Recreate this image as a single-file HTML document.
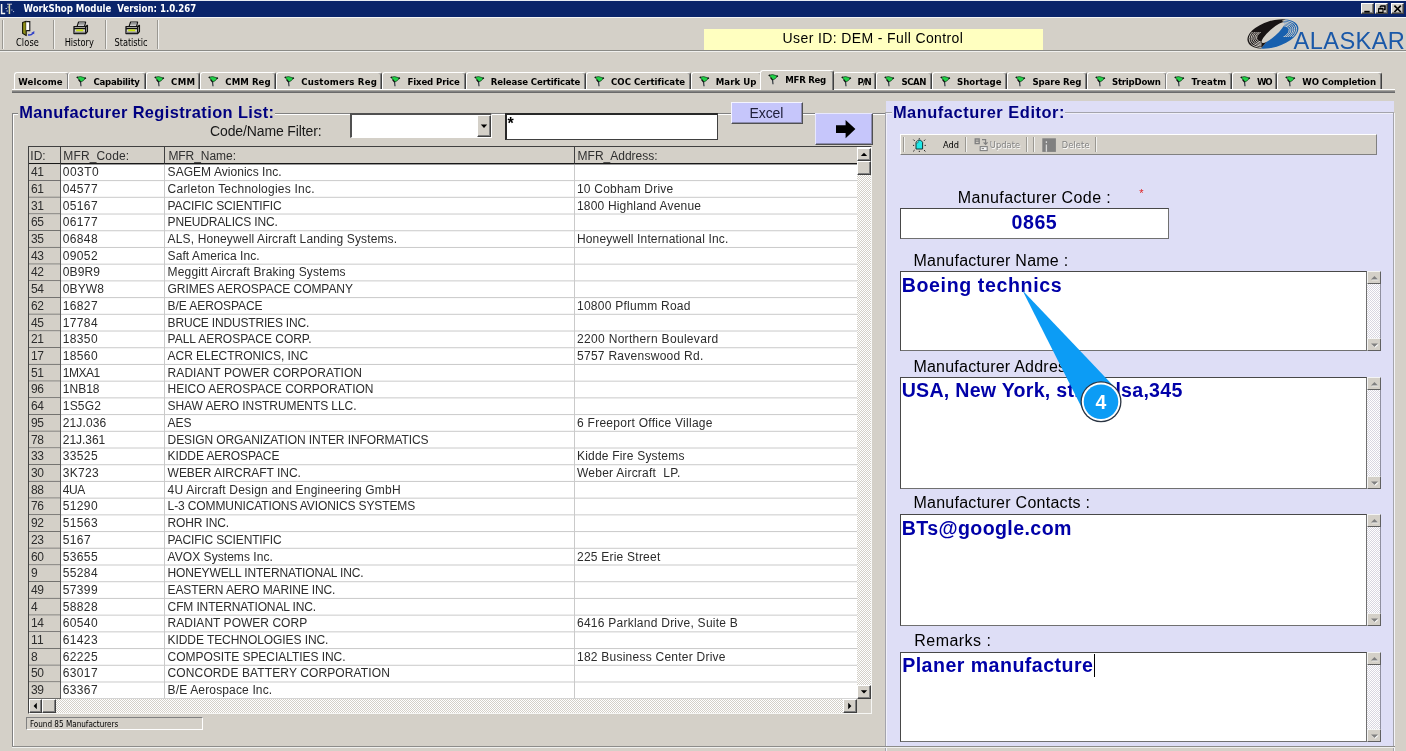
<!DOCTYPE html>
<html><head><meta charset="utf-8"><title>WorkShop Module</title>
<style>
*{box-sizing:border-box;margin:0;padding:0}
html,body{width:1406px;height:751px;overflow:hidden;background:#d4d0c8}
body{position:relative;font-family:"Liberation Sans",sans-serif;color:#000}
#all{position:absolute;left:0;top:0;width:1406px;height:751px;will-change:transform;filter:blur(.4px)}
div,span,svg,i,b{position:absolute}
.t{white-space:pre;line-height:1}
.thb{font-family:"DejaVu Sans Condensed","DejaVu Sans",sans-serif;font-weight:bold;font-size:9.55px}
#title{left:0;top:0;width:1406px;height:17px;background:#0a246a}
.wb{top:3px;width:13px;height:11px;background:#d4d0c8;border:1px solid;border-color:#fff #404040 #404040 #fff;box-shadow:inset -1px -1px 0 #808080}
#tbline{left:0;top:50px;width:1406px;height:2px;border-top:1px solid #8a8a86;border-bottom:1px solid #f0f0ee}
.vsep{top:20px;width:2px;height:29px;border-left:1px solid #9a9892;border-right:1px solid #f2f2f0}
#uid{left:704px;top:29px;width:339px;height:21px;background:#ffffc0}
/* tabs */
.tab{top:72px;height:18px;border-top:1px solid #fff;border-left:1px solid #fff;border-right:1px solid #404040;border-radius:3px 3px 0 0;background:#d4d0c8;box-shadow:inset -1px 0 0 #808080}
.tab .t{top:3.6px}
.tab svg{left:6.6px;top:2.6px}
.tab.sel{top:70px;height:20px;z-index:3}
#tabline{left:12px;top:89px;width:1383px;height:4px;border-top:1px solid #fff;background:#828282;border-bottom:1px solid #6a6a6a;z-index:2}
#tabline b{left:0;top:0;width:100%;height:1px;background:#a8a6a0}
/* group boxes */
.grp{border:1px solid #808080;box-shadow:1px 1px 0 #fff, inset 1px 1px 0 #fff}
/* grid */
#grid{left:28px;top:146px;width:844px;height:568px;background:#fff;border-left:1px solid #404040;border-top:1px solid #404040;border-right:1px solid #f6f6f4;border-bottom:1px solid #f6f6f4}
.hd{top:147px;height:17px;background:#d4d0c8;border-right:1px solid #404040;border-bottom:1px solid #181818;box-shadow:0 1px 0 #9a9a9a}
.r{left:29px;top:0;height:16.713px;width:828px;border-bottom:1px solid #cacaca;font-size:12px;color:#2c2c2c;white-space:pre;line-height:1}
.r span{top:2.4px}
.c0{left:0;top:0!important;width:32px;height:100%;background:#d4d0c8;border-right:1px solid #505050;box-shadow:0 1px 0 #505050}
.c0 .u{top:2.4px}


.vl{top:165px;width:1px;height:534px;background:#cacaca}
.sbtn{background:#d4d0c8;border:1px solid;border-color:#fff #404040 #404040 #fff;box-shadow:inset -1px -1px 0 #808080}
.dither{background:#eae8e4;background-image:conic-gradient(#fff 25%,#d4d0c8 0 50%,#fff 0 75%,#d4d0c8 0);background-size:2px 2px}
/* right panel */
#rp{left:886px;top:101px;width:508px;height:645px;background:#dedef6}
.box{background:#fff;border:1px solid #484848;border-right-color:#707070;border-bottom-color:#707070}
.msb{width:14px;background:#efeef2;background-image:conic-gradient(#fff 25%,#d8d6e0 0 50%,#fff 0 75%,#d8d6e0 0);background-size:2px 2px;border-right:1px solid #9090a0}
.msb i{left:0;width:14px;height:13px;background:#d4d0c8;border:1px solid;border-color:#f4f4f4 #606060 #606060 #f4f4f4}

</style></head>
<body><div id="all">

<div id="title">
<svg style="left:0;top:2px" width="16" height="14" viewBox="0 0 16 14"><path d="M1.6 2v9.4h3.6" stroke="#f4f4f4" stroke-width="1.5" fill="none"/><path d="M9.4 2v10" stroke="#d8d8a0" stroke-width="1.5"/><path d="M7 2.2h5" stroke="#c8c8d8" stroke-width="1"/><path d="M5.6 6.5h1.2M6.6 9h1.2M11.4 8h1M13.2 9.6h.9M7.6 5h1" stroke="#e8e8f0" stroke-width="1"/></svg>
<span class="t" style="left:23.60px;top:4.3px;font:bold 9.55px/1 'DejaVu Sans Condensed',sans-serif;letter-spacing:-0.006px;color:#fff;transform:scaleY(1.12);transform-origin:0 8px">WorkShop Module  Version: 1.0.267</span>
<div class="wb" style="left:1361px"><svg width="12" height="10" viewBox="0 0 12 10" style="left:0;top:0"><rect x="2.3" y="6.8" width="5.4" height="1.8" fill="#000"/></svg></div>
<div class="wb" style="left:1375px"><svg width="12" height="10" viewBox="0 0 12 10" style="left:0;top:0"><path d="M4.4 2h4.6v3.6h-1.4M4.4 2v1.6" fill="none" stroke="#000" stroke-width="1.5"/><path d="M2.6 4.8h4.4v3.6H2.6z" fill="none" stroke="#000" stroke-width="1.1"/><path d="M2.6 4.6h4.4" stroke="#000" stroke-width="1.6"/></svg></div>
<div class="wb" style="left:1391px"><svg width="12" height="10" viewBox="0 0 12 10" style="left:0;top:0"><path d="M2.4 1.6l6.4 6.4M8.8 1.6L2.4 8" stroke="#000" stroke-width="1.7" fill="none"/></svg></div>
</div>
<div style="left:0;top:17px;width:1406px;height:1px;background:#f4f4f4"></div><div style="left:0;top:0;width:1406px;height:1px;background:#e8ecf4;z-index:5"></div>
<div id="tbline"></div>
<div class="vsep" style="left:2px"></div><div class="vsep" style="left:53px"></div><div class="vsep" style="left:105px"></div><div class="vsep" style="left:157px"></div>
<svg style="left:21px;top:20px" width="15" height="17" viewBox="0 0 15 17"><path d="M1.6 2.6 L5.2 1.2 V15.6 L1.6 13.2 Z" fill="#909018" stroke="#181808" stroke-width="1.1" stroke-linejoin="round"/><path d="M5.2 1.6 H8.8 V10.6 H5.2" fill="#fff" stroke="#181818" stroke-width="1.1"/><path d="M7 14.8c2.2 .6 3.8 -.2 5 -1.6" stroke="#3040c8" stroke-width="1.5" fill="none"/><path d="M13.4 11l-.2 3.3-3-1.2z" fill="#3040c8"/></svg>
<svg style="left:72.5px;top:21px" width="16" height="15" viewBox="0 0 16 15"><path d="M4.2 5.2 L5.6 1 H12.6 L11.6 5.2" fill="#f4f4f4" stroke="#101010" stroke-width="1.2" stroke-linejoin="round"/><path d="M6 2.6h5.5M5.6 3.9h5.5" stroke="#606060" stroke-width=".7"/><path d="M1 5.6 H12.6 L14.4 4.4 V10.6 L12.6 12.6 H1 Z" fill="#d8d6d0" stroke="#101010" stroke-width="1.3" stroke-linejoin="round"/><path d="M1 7.6H12.6 M12.6 5.6V12.6" stroke="#101010" stroke-width="1.2"/><rect x="3.2" y="8.4" width="7" height="1.9" fill="#c8e010"/><path d="M1.6 11.4h10.6" stroke="#808080" stroke-width="1.4"/><path d="M2.5 13.6h10" stroke="#a0a0a0" stroke-width="1"/></svg>
<svg style="left:124.5px;top:21px" width="16" height="15" viewBox="0 0 16 15"><path d="M4.2 5.2 L5.6 1 H12.6 L11.6 5.2" fill="#f4f4f4" stroke="#101010" stroke-width="1.2" stroke-linejoin="round"/><path d="M6 2.6h5.5M5.6 3.9h5.5" stroke="#606060" stroke-width=".7"/><path d="M1 5.6 H12.6 L14.4 4.4 V10.6 L12.6 12.6 H1 Z" fill="#d8d6d0" stroke="#101010" stroke-width="1.3" stroke-linejoin="round"/><path d="M1 7.6H12.6 M12.6 5.6V12.6" stroke="#101010" stroke-width="1.2"/><rect x="3.2" y="8.4" width="7" height="1.9" fill="#c8e010"/><path d="M1.6 11.4h10.6" stroke="#808080" stroke-width="1.4"/><path d="M2.5 13.6h10" stroke="#a0a0a0" stroke-width="1"/></svg>
<span class="t" style="left:16.00px;top:37.6px;font:normal 9.2px/1 'DejaVu Sans Condensed',sans-serif;letter-spacing:0.092px;transform:scaleY(1.08);transform-origin:0 8px">Close</span>
<span class="t" style="left:64.70px;top:37.6px;font:normal 9.2px/1 'DejaVu Sans Condensed',sans-serif;letter-spacing:-0.052px;transform:scaleY(1.08);transform-origin:0 8px">History</span>
<span class="t" style="left:114.50px;top:37.6px;font:normal 9.2px/1 'DejaVu Sans Condensed',sans-serif;letter-spacing:-0.054px;transform:scaleY(1.08);transform-origin:0 8px">Statistic</span>

<div id="uid"></div>
<span class="t" style="left:782.60px;top:31.0px;font:normal 14px/1 'Liberation Sans',sans-serif;letter-spacing:0.379px;">User ID: DEM - Full Control</span>

<svg id="logo" style="left:1244px;top:17px" width="162" height="34" viewBox="0 0 162 34">
<defs>
<clipPath id="ck"><path d="M-20 70 L16.5 32 L42.5 1 L60 -20 L-40 -40 Z"/></clipPath>
<clipPath id="cb"><path d="M-20 70 L16.5 32 L42.5 1 L60 -20 L120 60 Z"/></clipPath>
<clipPath id="ce"><path d="M-2 15 H17.5 V34 H-2 Z M38.5 0 H58 V20 H38.5 Z"/></clipPath>
</defs>
<g fill-rule="evenodd">
<path id="ring" clip-path="url(#cb)" fill="#1860ae" d="M3.77 24.40 A26.2 13.0 -16.4 1 0 54.03 9.60 A26.2 13.0 -16.4 1 0 3.77 24.40 Z M18 25.4 A14.6 3.6 -41.7 1 0 39.8 6 A14.6 3.6 -41.7 1 0 18 25.4 Z"/>
<path clip-path="url(#ck)" fill="#181414" d="M3.77 24.40 A26.2 13.0 -16.4 1 0 54.03 9.60 A26.2 13.0 -16.4 1 0 3.77 24.40 Z M18 25.4 A14.6 3.6 -41.7 1 0 39.8 6 A14.6 3.6 -41.7 1 0 18 25.4 Z"/>
</g>
<g fill="none" stroke="#d4d0c8" stroke-width=".95" clip-path="url(#ce)"><path d="M5.53 23.88 A24.37 11.86 -16.4 1 0 52.27 10.12 A24.37 11.86 -16.4 1 0 5.53 23.88"/><path d="M7.28 23.36 A22.53 10.72 -16.4 1 0 50.52 10.64 A22.53 10.72 -16.4 1 0 7.28 23.36"/><path d="M9.04 22.84 A20.70 9.59 -16.4 1 0 48.76 11.16 A20.70 9.59 -16.4 1 0 9.04 22.84"/><path d="M10.80 22.33 A18.86 8.45 -16.4 1 0 47.00 11.67 A18.86 8.45 -16.4 1 0 10.80 22.33"/><path d="M12.56 21.81 A17.03 7.31 -16.4 1 0 45.24 12.19 A17.03 7.31 -16.4 1 0 12.56 21.81"/></g>
<text x="49.6" y="32.2" font-family="Liberation Sans, sans-serif" font-size="23.6" fill="#1a58a8" letter-spacing="0.4">ALASKAR</text>
</svg>

<div class="tab" style="left:14px;width:55px"><span class="t thb" style="left:3.30px;letter-spacing:0.109px">Welcome</span></div>
<div class="tab" style="left:68px;width:78px"><svg style="left:6.6px" width="11" height="11" viewBox="0 0 11 11"><path d="M1 1.2 L4.6 0.6 L9.6 2 L7.4 4.6 L4.8 6 L2.8 3.6 Z" fill="#22d048" stroke="#0a3a14" stroke-width=".7" stroke-linejoin="round"/><path d="M.7 .9l1.2 .9M9.9 1.8l-1.3 .9M2.6 3.6L4.6 6.2" stroke="#101010" stroke-width="1.3" fill="none"/><path d="M4.6 6 L5 10.2" stroke="#202830" stroke-width="1.1" fill="none"/></svg><span class="t thb" style="left:24.50px;letter-spacing:-0.258px">Capability</span></div>
<div class="tab" style="left:146px;width:54px"><svg style="left:6.6px" width="11" height="11" viewBox="0 0 11 11"><path d="M1 1.2 L4.6 0.6 L9.6 2 L7.4 4.6 L4.8 6 L2.8 3.6 Z" fill="#22d048" stroke="#0a3a14" stroke-width=".7" stroke-linejoin="round"/><path d="M.7 .9l1.2 .9M9.9 1.8l-1.3 .9M2.6 3.6L4.6 6.2" stroke="#101010" stroke-width="1.3" fill="none"/><path d="M4.6 6 L5 10.2" stroke="#202830" stroke-width="1.1" fill="none"/></svg><span class="t thb" style="left:24.00px;letter-spacing:0.374px">CMM</span></div>
<div class="tab" style="left:200px;width:76px"><svg style="left:6.6px" width="11" height="11" viewBox="0 0 11 11"><path d="M1 1.2 L4.6 0.6 L9.6 2 L7.4 4.6 L4.8 6 L2.8 3.6 Z" fill="#22d048" stroke="#0a3a14" stroke-width=".7" stroke-linejoin="round"/><path d="M.7 .9l1.2 .9M9.9 1.8l-1.3 .9M2.6 3.6L4.6 6.2" stroke="#101010" stroke-width="1.3" fill="none"/><path d="M4.6 6 L5 10.2" stroke="#202830" stroke-width="1.1" fill="none"/></svg><span class="t thb" style="left:24.30px;letter-spacing:0.062px">CMM Reg</span></div>
<div class="tab" style="left:276px;width:106px"><svg style="left:6.6px" width="11" height="11" viewBox="0 0 11 11"><path d="M1 1.2 L4.6 0.6 L9.6 2 L7.4 4.6 L4.8 6 L2.8 3.6 Z" fill="#22d048" stroke="#0a3a14" stroke-width=".7" stroke-linejoin="round"/><path d="M.7 .9l1.2 .9M9.9 1.8l-1.3 .9M2.6 3.6L4.6 6.2" stroke="#101010" stroke-width="1.3" fill="none"/><path d="M4.6 6 L5 10.2" stroke="#202830" stroke-width="1.1" fill="none"/></svg><span class="t thb" style="left:24.20px;letter-spacing:0.200px">Customers Reg</span></div>
<div class="tab" style="left:382px;width:84px"><svg style="left:6.6px" width="11" height="11" viewBox="0 0 11 11"><path d="M1 1.2 L4.6 0.6 L9.6 2 L7.4 4.6 L4.8 6 L2.8 3.6 Z" fill="#22d048" stroke="#0a3a14" stroke-width=".7" stroke-linejoin="round"/><path d="M.7 .9l1.2 .9M9.9 1.8l-1.3 .9M2.6 3.6L4.6 6.2" stroke="#101010" stroke-width="1.3" fill="none"/><path d="M4.6 6 L5 10.2" stroke="#202830" stroke-width="1.1" fill="none"/></svg><span class="t thb" style="left:24.40px;letter-spacing:-0.117px">Fixed Price</span></div>
<div class="tab" style="left:466px;width:120px"><svg style="left:6.6px" width="11" height="11" viewBox="0 0 11 11"><path d="M1 1.2 L4.6 0.6 L9.6 2 L7.4 4.6 L4.8 6 L2.8 3.6 Z" fill="#22d048" stroke="#0a3a14" stroke-width=".7" stroke-linejoin="round"/><path d="M.7 .9l1.2 .9M9.9 1.8l-1.3 .9M2.6 3.6L4.6 6.2" stroke="#101010" stroke-width="1.3" fill="none"/><path d="M4.6 6 L5 10.2" stroke="#202830" stroke-width="1.1" fill="none"/></svg><span class="t thb" style="left:23.80px;letter-spacing:-0.123px">Release Certificate</span></div>
<div class="tab" style="left:586px;width:105px"><svg style="left:6.6px" width="11" height="11" viewBox="0 0 11 11"><path d="M1 1.2 L4.6 0.6 L9.6 2 L7.4 4.6 L4.8 6 L2.8 3.6 Z" fill="#22d048" stroke="#0a3a14" stroke-width=".7" stroke-linejoin="round"/><path d="M.7 .9l1.2 .9M9.9 1.8l-1.3 .9M2.6 3.6L4.6 6.2" stroke="#101010" stroke-width="1.3" fill="none"/><path d="M4.6 6 L5 10.2" stroke="#202830" stroke-width="1.1" fill="none"/></svg><span class="t thb" style="left:24.00px;letter-spacing:0.024px">COC Certificate</span></div>
<div class="tab" style="left:691px;width:71px"><svg style="left:6.6px" width="11" height="11" viewBox="0 0 11 11"><path d="M1 1.2 L4.6 0.6 L9.6 2 L7.4 4.6 L4.8 6 L2.8 3.6 Z" fill="#22d048" stroke="#0a3a14" stroke-width=".7" stroke-linejoin="round"/><path d="M.7 .9l1.2 .9M9.9 1.8l-1.3 .9M2.6 3.6L4.6 6.2" stroke="#101010" stroke-width="1.3" fill="none"/><path d="M4.6 6 L5 10.2" stroke="#202830" stroke-width="1.1" fill="none"/></svg><span class="t thb" style="left:23.70px;letter-spacing:0.058px">Mark Up</span></div>
<div class="tab sel" style="left:760px;width:74px"><svg style="left:6.9px" width="11" height="11" viewBox="0 0 11 11"><path d="M1 1.2 L4.6 0.6 L9.6 2 L7.4 4.6 L4.8 6 L2.8 3.6 Z" fill="#22d048" stroke="#0a3a14" stroke-width=".7" stroke-linejoin="round"/><path d="M.7 .9l1.2 .9M9.9 1.8l-1.3 .9M2.6 3.6L4.6 6.2" stroke="#101010" stroke-width="1.3" fill="none"/><path d="M4.6 6 L5 10.2" stroke="#202830" stroke-width="1.1" fill="none"/></svg><span class="t thb" style="left:24.30px;letter-spacing:-0.294px">MFR Reg</span></div>
<div class="tab" style="left:833px;width:43px"><svg style="left:6.6px" width="11" height="11" viewBox="0 0 11 11"><path d="M1 1.2 L4.6 0.6 L9.6 2 L7.4 4.6 L4.8 6 L2.8 3.6 Z" fill="#22d048" stroke="#0a3a14" stroke-width=".7" stroke-linejoin="round"/><path d="M.7 .9l1.2 .9M9.9 1.8l-1.3 .9M2.6 3.6L4.6 6.2" stroke="#101010" stroke-width="1.3" fill="none"/><path d="M4.6 6 L5 10.2" stroke="#202830" stroke-width="1.1" fill="none"/></svg><span class="t thb" style="left:23.60px;letter-spacing:-1.200px">P/N</span></div>
<div class="tab" style="left:876px;width:56px"><svg style="left:6.6px" width="11" height="11" viewBox="0 0 11 11"><path d="M1 1.2 L4.6 0.6 L9.6 2 L7.4 4.6 L4.8 6 L2.8 3.6 Z" fill="#22d048" stroke="#0a3a14" stroke-width=".7" stroke-linejoin="round"/><path d="M.7 .9l1.2 .9M9.9 1.8l-1.3 .9M2.6 3.6L4.6 6.2" stroke="#101010" stroke-width="1.3" fill="none"/><path d="M4.6 6 L5 10.2" stroke="#202830" stroke-width="1.1" fill="none"/></svg><span class="t thb" style="left:24.40px;letter-spacing:-0.412px">SCAN</span></div>
<div class="tab" style="left:932px;width:75px"><svg style="left:6.6px" width="11" height="11" viewBox="0 0 11 11"><path d="M1 1.2 L4.6 0.6 L9.6 2 L7.4 4.6 L4.8 6 L2.8 3.6 Z" fill="#22d048" stroke="#0a3a14" stroke-width=".7" stroke-linejoin="round"/><path d="M.7 .9l1.2 .9M9.9 1.8l-1.3 .9M2.6 3.6L4.6 6.2" stroke="#101010" stroke-width="1.3" fill="none"/><path d="M4.6 6 L5 10.2" stroke="#202830" stroke-width="1.1" fill="none"/></svg><span class="t thb" style="left:24.00px;letter-spacing:0.030px">Shortage</span></div>
<div class="tab" style="left:1007px;width:80px"><svg style="left:6.6px" width="11" height="11" viewBox="0 0 11 11"><path d="M1 1.2 L4.6 0.6 L9.6 2 L7.4 4.6 L4.8 6 L2.8 3.6 Z" fill="#22d048" stroke="#0a3a14" stroke-width=".7" stroke-linejoin="round"/><path d="M.7 .9l1.2 .9M9.9 1.8l-1.3 .9M2.6 3.6L4.6 6.2" stroke="#101010" stroke-width="1.3" fill="none"/><path d="M4.6 6 L5 10.2" stroke="#202830" stroke-width="1.1" fill="none"/></svg><span class="t thb" style="left:24.40px;letter-spacing:-0.090px">Spare Reg</span></div>
<div class="tab" style="left:1087px;width:80px"><svg style="left:6.6px" width="11" height="11" viewBox="0 0 11 11"><path d="M1 1.2 L4.6 0.6 L9.6 2 L7.4 4.6 L4.8 6 L2.8 3.6 Z" fill="#22d048" stroke="#0a3a14" stroke-width=".7" stroke-linejoin="round"/><path d="M.7 .9l1.2 .9M9.9 1.8l-1.3 .9M2.6 3.6L4.6 6.2" stroke="#101010" stroke-width="1.3" fill="none"/><path d="M4.6 6 L5 10.2" stroke="#202830" stroke-width="1.1" fill="none"/></svg><span class="t thb" style="left:24.00px;letter-spacing:-0.223px">StripDown</span></div>
<div class="tab" style="left:1166px;width:66px"><svg style="left:6.6px" width="11" height="11" viewBox="0 0 11 11"><path d="M1 1.2 L4.6 0.6 L9.6 2 L7.4 4.6 L4.8 6 L2.8 3.6 Z" fill="#22d048" stroke="#0a3a14" stroke-width=".7" stroke-linejoin="round"/><path d="M.7 .9l1.2 .9M9.9 1.8l-1.3 .9M2.6 3.6L4.6 6.2" stroke="#101010" stroke-width="1.3" fill="none"/><path d="M4.6 6 L5 10.2" stroke="#202830" stroke-width="1.1" fill="none"/></svg><span class="t thb" style="left:24.50px;letter-spacing:0.205px">Treatm</span></div>
<div class="tab" style="left:1232px;width:45px"><svg style="left:6.6px" width="11" height="11" viewBox="0 0 11 11"><path d="M1 1.2 L4.6 0.6 L9.6 2 L7.4 4.6 L4.8 6 L2.8 3.6 Z" fill="#22d048" stroke="#0a3a14" stroke-width=".7" stroke-linejoin="round"/><path d="M.7 .9l1.2 .9M9.9 1.8l-1.3 .9M2.6 3.6L4.6 6.2" stroke="#101010" stroke-width="1.3" fill="none"/><path d="M4.6 6 L5 10.2" stroke="#202830" stroke-width="1.1" fill="none"/></svg><span class="t thb" style="left:24.00px;letter-spacing:-1.200px">WO</span></div>
<div class="tab" style="left:1277px;width:105px"><svg style="left:6.6px" width="11" height="11" viewBox="0 0 11 11"><path d="M1 1.2 L4.6 0.6 L9.6 2 L7.4 4.6 L4.8 6 L2.8 3.6 Z" fill="#22d048" stroke="#0a3a14" stroke-width=".7" stroke-linejoin="round"/><path d="M.7 .9l1.2 .9M9.9 1.8l-1.3 .9M2.6 3.6L4.6 6.2" stroke="#101010" stroke-width="1.3" fill="none"/><path d="M4.6 6 L5 10.2" stroke="#202830" stroke-width="1.1" fill="none"/></svg><span class="t thb" style="left:24.30px;letter-spacing:-0.099px">WO Completion</span></div>
<div id="tabline"><b></b></div>

<!-- left group -->
<div class="grp" style="left:12px;top:113px;width:880px;height:634px"></div>
<div style="left:18px;top:105px;width:257px;height:16px;background:#d4d0c8"></div>
<span class="t" style="left:19.20px;top:103.7px;font:bold 16.4px/1 'Liberation Sans',sans-serif;letter-spacing:0.390px;color:#000080">Manufacturer Registration List:</span>
<span class="t" style="left:210.00px;top:123.6px;font:normal 14px/1 'Liberation Sans',sans-serif;letter-spacing:-0.125px;color:#181818">Code/Name Filter:</span>
<div class="box" style="left:350px;top:113px;width:142px;height:25px;border-width:2px 1px 1px 2px;border-color:#505050 #fff #fff #505050"><div class="sbtn" style="left:125px;top:0;width:14px;height:22px"><svg width="12" height="20" viewBox="0 0 12 20" style="left:0;top:0"><path d="M2.8 8.6h6.4l-3.2 3.4z" fill="#000"/></svg></div></div>
<div class="box" style="left:505px;top:113px;width:213px;height:27px;border-width:2px 1px 1px 2px;border-color:#282828 #404040 #404040 #282828"><span class="t" style="left:0.5px;top:1px;font:bold 16px/1 'Liberation Sans',sans-serif">*</span></div>
<div style="left:731px;top:102px;width:72px;height:22px;background:#c6c6fb;border:1px solid;border-color:#f4f4ff #505050 #505050 #f4f4ff;box-shadow:inset -1px -1px 0 #8c8cb0"></div>
<span class="t" style="left:749.50px;top:105.6px;font:normal 14px/1 'Liberation Sans',sans-serif;letter-spacing:-0.106px;color:#20203c">Excel</span>
<div style="left:815px;top:113px;width:58px;height:32px;background:#c6c6fb;border:1px solid;border-color:#e8e8ff #505050 #505050 #e8e8ff;box-shadow:inset -1px -1px 0 #8c8cb0"><svg width="24" height="22" viewBox="0 0 24 22" style="left:17.5px;top:4.5px"><path d="M2 6.3h9.6V1L21.4 10 11.6 19.2v-5.3H2z" fill="#000"/></svg></div>

<div id="grid"></div>
<div class="hd" style="left:29px;width:32px"></div>
<div class="hd" style="left:61px;width:104px"></div>
<div class="hd" style="left:165px;width:410px"></div>
<div class="hd" style="left:575px;width:282px;border-right:0"></div>
<span class="t" style="left:30.30px;top:149.6px;font:normal 12px/1 'Liberation Sans',sans-serif;letter-spacing:0.000px;color:#303030">ID:</span><span class="t" style="left:63.30px;top:149.6px;font:normal 12px/1 'Liberation Sans',sans-serif;letter-spacing:0.143px;color:#303030">MFR_Code:</span><span class="t" style="left:168.40px;top:149.6px;font:normal 12px/1 'Liberation Sans',sans-serif;letter-spacing:-0.047px;color:#303030">MFR_Name:</span><span class="t" style="left:577.60px;top:149.6px;font:normal 12px/1 'Liberation Sans',sans-serif;letter-spacing:0.000px;color:#303030">MFR_Address:</span>
<div class="r" style="transform:translateY(164.10px)"><span class="c0"><span class="u" style="left:2.00px;letter-spacing:-0.500px">41</span></span><span class="c1" style="left:33.80px;letter-spacing:0.437px">003T0</span><span class="c2" style="left:138.60px;letter-spacing:0.045px">SAGEM Avionics Inc.</span></div>
<div class="r" style="transform:translateY(180.81px)"><span class="c0"><span class="u" style="left:2.00px;letter-spacing:-0.500px">61</span></span><span class="c1" style="left:33.80px;letter-spacing:0.351px">04577</span><span class="c2" style="left:138.60px;letter-spacing:0.229px">Carleton Technologies Inc.</span><span class="c3" style="left:548.00px;letter-spacing:0.200px">10 Cobham Drive</span></div>
<div class="r" style="transform:translateY(197.53px)"><span class="c0"><span class="u" style="left:2.00px;letter-spacing:-0.500px">31</span></span><span class="c1" style="left:33.80px;letter-spacing:0.351px">05167</span><span class="c2" style="left:138.60px;letter-spacing:-0.146px">PACIFIC SCIENTIFIC</span><span class="c3" style="left:548.00px;letter-spacing:0.177px">1800 Highland Avenue</span></div>
<div class="r" style="transform:translateY(214.24px)"><span class="c0"><span class="u" style="left:2.00px;letter-spacing:-0.500px">65</span></span><span class="c1" style="left:33.80px;letter-spacing:0.351px">06177</span><span class="c2" style="left:138.60px;letter-spacing:-0.164px">PNEUDRALICS INC.</span></div>
<div class="r" style="transform:translateY(230.95px)"><span class="c0"><span class="u" style="left:2.00px;letter-spacing:-0.500px">35</span></span><span class="c1" style="left:33.80px;letter-spacing:0.351px">06848</span><span class="c2" style="left:138.60px;letter-spacing:0.138px">ALS, Honeywell Aircraft Landing Systems.</span><span class="c3" style="left:548.00px;letter-spacing:0.141px">Honeywell International Inc.</span></div>
<div class="r" style="transform:translateY(247.66px)"><span class="c0"><span class="u" style="left:2.00px;letter-spacing:-0.500px">43</span></span><span class="c1" style="left:33.80px;letter-spacing:0.351px">09052</span><span class="c2" style="left:138.60px;letter-spacing:0.086px">Saft America Inc.</span></div>
<div class="r" style="transform:translateY(264.38px)"><span class="c0"><span class="u" style="left:2.00px;letter-spacing:-0.500px">42</span></span><span class="c1" style="left:33.80px;letter-spacing:0.121px">0B9R9</span><span class="c2" style="left:138.60px;letter-spacing:0.147px">Meggitt Aircraft Braking Systems</span></div>
<div class="r" style="transform:translateY(281.09px)"><span class="c0"><span class="u" style="left:2.00px;letter-spacing:-0.500px">54</span></span><span class="c1" style="left:33.80px;letter-spacing:0.123px">0BYW8</span><span class="c2" style="left:138.60px;letter-spacing:-0.069px">GRIMES AEROSPACE COMPANY</span></div>
<div class="r" style="transform:translateY(297.80px)"><span class="c0"><span class="u" style="left:2.00px;letter-spacing:-0.500px">62</span></span><span class="c1" style="left:33.80px;letter-spacing:0.351px">16827</span><span class="c2" style="left:138.60px;letter-spacing:-0.073px">B/E AEROSPACE</span><span class="c3" style="left:548.00px;letter-spacing:0.255px">10800 Pflumm Road</span></div>
<div class="r" style="transform:translateY(314.52px)"><span class="c0"><span class="u" style="left:2.00px;letter-spacing:-0.500px">45</span></span><span class="c1" style="left:33.80px;letter-spacing:0.351px">17784</span><span class="c2" style="left:138.60px;letter-spacing:-0.181px">BRUCE INDUSTRIES INC.</span></div>
<div class="r" style="transform:translateY(331.23px)"><span class="c0"><span class="u" style="left:2.00px;letter-spacing:-0.500px">21</span></span><span class="c1" style="left:33.80px;letter-spacing:0.351px">18350</span><span class="c2" style="left:138.60px;letter-spacing:-0.013px">PALL AEROSPACE CORP.</span><span class="c3" style="left:548.00px;letter-spacing:0.322px">2200 Northern Boulevard</span></div>
<div class="r" style="transform:translateY(347.94px)"><span class="c0"><span class="u" style="left:2.00px;letter-spacing:-0.500px">17</span></span><span class="c1" style="left:33.80px;letter-spacing:0.351px">18560</span><span class="c2" style="left:138.60px;letter-spacing:-0.047px">ACR ELECTRONICS, INC</span><span class="c3" style="left:548.00px;letter-spacing:0.273px">5757 Ravenswood Rd.</span></div>
<div class="r" style="transform:translateY(364.66px)"><span class="c0"><span class="u" style="left:2.00px;letter-spacing:-0.500px">51</span></span><span class="c1" style="left:33.80px;letter-spacing:-0.500px">1MXA1</span><span class="c2" style="left:138.60px;letter-spacing:0.064px">RADIANT POWER CORPORATION</span></div>
<div class="r" style="transform:translateY(381.37px)"><span class="c0"><span class="u" style="left:2.00px;letter-spacing:-0.500px">96</span></span><span class="c1" style="left:33.80px;letter-spacing:-0.004px">1NB18</span><span class="c2" style="left:138.60px;letter-spacing:-0.014px">HEICO AEROSPACE CORPORATION</span></div>
<div class="r" style="transform:translateY(398.08px)"><span class="c0"><span class="u" style="left:2.00px;letter-spacing:-0.500px">64</span></span><span class="c1" style="left:33.80px;letter-spacing:0.179px">1S5G2</span><span class="c2" style="left:138.60px;letter-spacing:-0.082px">SHAW AERO INSTRUMENTS LLC.</span></div>
<div class="r" style="transform:translateY(414.80px)"><span class="c0"><span class="u" style="left:2.00px;letter-spacing:-0.500px">95</span></span><span class="c1" style="left:33.80px;letter-spacing:0.112px">21J.036</span><span class="c2" style="left:138.60px;letter-spacing:-0.054px">AES</span><span class="c3" style="left:548.00px;letter-spacing:0.271px">6 Freeport Office Village</span></div>
<div class="r" style="transform:translateY(431.51px)"><span class="c0"><span class="u" style="left:2.00px;letter-spacing:-0.500px">78</span></span><span class="c1" style="left:33.80px;letter-spacing:-0.038px">21J.361</span><span class="c2" style="left:138.60px;letter-spacing:-0.092px">DESIGN ORGANIZATION INTER INFORMATICS</span></div>
<div class="r" style="transform:translateY(448.22px)"><span class="c0"><span class="u" style="left:2.00px;letter-spacing:-0.500px">33</span></span><span class="c1" style="left:33.80px;letter-spacing:0.351px">33525</span><span class="c2" style="left:138.60px;letter-spacing:-0.093px">KIDDE AEROSPACE</span><span class="c3" style="left:548.00px;letter-spacing:0.198px">Kidde Fire Systems</span></div>
<div class="r" style="transform:translateY(464.93px)"><span class="c0"><span class="u" style="left:2.00px;letter-spacing:-0.500px">30</span></span><span class="c1" style="left:33.80px;letter-spacing:0.294px">3K723</span><span class="c2" style="left:138.60px;letter-spacing:-0.030px">WEBER AIRCRAFT INC.</span><span class="c3" style="left:548.00px;letter-spacing:0.241px">Weber Aircraft&nbsp; LP.</span></div>
<div class="r" style="transform:translateY(481.65px)"><span class="c0"><span class="u" style="left:2.00px;letter-spacing:-0.500px">88</span></span><span class="c1" style="left:33.80px;letter-spacing:-0.470px">4UA</span><span class="c2" style="left:138.60px;letter-spacing:0.199px">4U Aircraft Design and Engineering GmbH</span></div>
<div class="r" style="transform:translateY(498.36px)"><span class="c0"><span class="u" style="left:2.00px;letter-spacing:-0.500px">76</span></span><span class="c1" style="left:33.80px;letter-spacing:0.351px">51290</span><span class="c2" style="left:138.60px;letter-spacing:-0.116px">L-3 COMMUNICATIONS AVIONICS SYSTEMS</span></div>
<div class="r" style="transform:translateY(515.07px)"><span class="c0"><span class="u" style="left:2.00px;letter-spacing:-0.500px">92</span></span><span class="c1" style="left:33.80px;letter-spacing:0.351px">51563</span><span class="c2" style="left:138.60px;letter-spacing:-0.154px">ROHR INC.</span></div>
<div class="r" style="transform:translateY(531.79px)"><span class="c0"><span class="u" style="left:2.00px;letter-spacing:-0.500px">23</span></span><span class="c1" style="left:33.80px;letter-spacing:0.360px">5167</span><span class="c2" style="left:138.60px;letter-spacing:-0.146px">PACIFIC SCIENTIFIC</span></div>
<div class="r" style="transform:translateY(548.50px)"><span class="c0"><span class="u" style="left:2.00px;letter-spacing:-0.500px">60</span></span><span class="c1" style="left:33.80px;letter-spacing:0.351px">53655</span><span class="c2" style="left:138.60px;letter-spacing:0.048px">AVOX Systems Inc.</span><span class="c3" style="left:548.00px;letter-spacing:0.228px">225 Erie Street</span></div>
<div class="r" style="transform:translateY(565.21px)"><span class="c0"><span class="u" style="left:2.00px;letter-spacing:0.000px">9</span></span><span class="c1" style="left:33.80px;letter-spacing:0.351px">55284</span><span class="c2" style="left:138.60px;letter-spacing:-0.160px">HONEYWELL INTERNATIONAL INC.</span></div>
<div class="r" style="transform:translateY(581.93px)"><span class="c0"><span class="u" style="left:2.00px;letter-spacing:-0.500px">49</span></span><span class="c1" style="left:33.80px;letter-spacing:0.351px">57399</span><span class="c2" style="left:138.60px;letter-spacing:-0.127px">EASTERN AERO MARINE INC.</span></div>
<div class="r" style="transform:translateY(598.64px)"><span class="c0"><span class="u" style="left:2.00px;letter-spacing:0.000px">4</span></span><span class="c1" style="left:33.80px;letter-spacing:0.351px">58828</span><span class="c2" style="left:138.60px;letter-spacing:-0.131px">CFM INTERNATIONAL INC.</span></div>
<div class="r" style="transform:translateY(615.35px)"><span class="c0"><span class="u" style="left:2.00px;letter-spacing:-0.500px">14</span></span><span class="c1" style="left:33.80px;letter-spacing:0.351px">60540</span><span class="c2" style="left:138.60px;letter-spacing:0.027px">RADIANT POWER CORP</span><span class="c3" style="left:548.00px;letter-spacing:0.249px">6416 Parkland Drive, Suite B</span></div>
<div class="r" style="transform:translateY(632.06px)"><span class="c0"><span class="u" style="left:2.00px;letter-spacing:0.317px">11</span></span><span class="c1" style="left:33.80px;letter-spacing:0.351px">61423</span><span class="c2" style="left:138.60px;letter-spacing:-0.075px">KIDDE TECHNOLOGIES INC.</span></div>
<div class="r" style="transform:translateY(648.78px)"><span class="c0"><span class="u" style="left:2.00px;letter-spacing:0.000px">8</span></span><span class="c1" style="left:33.80px;letter-spacing:0.351px">62225</span><span class="c2" style="left:138.60px;letter-spacing:-0.048px">COMPOSITE SPECIALTIES INC.</span><span class="c3" style="left:548.00px;letter-spacing:0.239px">182 Business Center Drive</span></div>
<div class="r" style="transform:translateY(665.49px)"><span class="c0"><span class="u" style="left:2.00px;letter-spacing:-0.500px">50</span></span><span class="c1" style="left:33.80px;letter-spacing:0.351px">63017</span><span class="c2" style="left:138.60px;letter-spacing:0.115px">CONCORDE BATTERY CORPORATION</span></div>
<div class="r" style="transform:translateY(682.20px)"><span class="c0"><span class="u" style="left:2.00px;letter-spacing:-0.500px">39</span></span><span class="c1" style="left:33.80px;letter-spacing:0.351px">63367</span><span class="c2" style="left:138.60px;letter-spacing:0.148px">B/E Aerospace Inc.</span></div>
<div class="vl" style="left:60px;background:#585858"></div><div class="vl" style="left:164px"></div><div class="vl" style="left:574px"></div>
<!-- scrollbars -->
<div class="dither" style="left:857px;top:148px;width:14px;height:551px"></div>
<div class="sbtn" style="left:857px;top:148px;width:14px;height:13px"><svg width="12" height="11" viewBox="0 0 12 11" style="left:0;top:0"><path d="M2.8 7h6.4L6 3.8z" fill="#000"/></svg></div>
<div class="sbtn" style="left:857px;top:161px;width:14px;height:14px"></div>
<div class="sbtn" style="left:857px;top:685px;width:14px;height:14px"><svg width="12" height="11" viewBox="0 0 12 11" style="left:0;top:0"><path d="M2.8 4.2h6.4L6 7.4z" fill="#000"/></svg></div>
<div class="dither" style="left:29px;top:699px;width:828px;height:14px"></div>
<div class="sbtn" style="left:29px;top:699px;width:13px;height:14px"><svg width="11" height="12" viewBox="0 0 11 12" style="left:0;top:0"><path d="M6.8 2.8v6.4L3.6 6z" fill="#000"/></svg></div>
<div class="sbtn" style="left:42px;top:699px;width:14px;height:14px"></div>
<div class="sbtn" style="left:843px;top:699px;width:14px;height:14px"><svg width="11" height="12" viewBox="0 0 11 12" style="left:0;top:0"><path d="M4.2 2.8v6.4L7.4 6z" fill="#000"/></svg></div>
<div style="left:857px;top:699px;width:14px;height:14px;background:#d4d0c8"></div>
<div style="left:26px;top:717px;width:177px;height:13px;border:1px solid;border-color:#808080 #fff #fff #808080"></div>
<span class="t" style="left:29.90px;top:719.6px;font:normal 8.1px/1 'DejaVu Sans Condensed',sans-serif;letter-spacing:-0.008px;">Found 85 Manufacturers</span>

<!-- right panel -->
<div id="rp"></div>
<div style="left:12px;top:746px;width:1383px;height:2px;border-top:1px solid #8c8c8a;border-bottom:1px solid #f0f0ee;z-index:4"></div>
<div class="grp" style="left:885px;top:112px;width:509px;height:640px;border-color:#a4a4ac;box-shadow:1px 1px 0 #f4f4f8, inset 1px 1px 0 #f0f0fa"></div>
<div style="left:892px;top:105px;width:173px;height:16px;background:#dedef6"></div>
<span class="t" style="left:892.90px;top:104.1px;font:bold 16.4px/1 'Liberation Sans',sans-serif;letter-spacing:0.546px;color:#000080">Manufacturer Editor:</span>
<div style="left:900px;top:134px;width:477px;height:21px;background:#d4d0c8;border:1px solid;border-color:#fff #808080 #808080 #fff"></div>
<div class="vsep" style="left:903px;top:137px;height:15px"></div>
<div class="vsep" style="left:965px;top:137px;height:15px"></div>
<div class="vsep" style="left:1026px;top:137px;height:15px"></div>
<div class="vsep" style="left:1033px;top:137px;height:15px"></div>
<div class="vsep" style="left:1095px;top:137px;height:15px"></div>
<svg style="left:912px;top:137.5px" width="15" height="15" viewBox="0 0 15 15"><path d="M4 4.2L6.4 2.2h2.2l2 2v6.8H4z" fill="#20e8e8" stroke="#103838" stroke-width="1"/><path d="M6 2.4v2.4H4.2" fill="#fff" stroke="#103838" stroke-width=".6"/><path d="M1.4 1.6l1.3 1.3M13.2 1.6l-1.3 1.3M1.2 13.4l1.4-1.3M13.4 13.4l-1.4-1.3M7.3 .2v1.1M7.3 12.8v1.2M1 7.4h1.2M12.6 7.4h1.2" stroke="#202020" stroke-width="1"/></svg>
<span class="t" style="left:943.00px;top:140.0px;font:normal 9.2px/1 'DejaVu Sans Condensed',sans-serif;letter-spacing:-0.020px;">Add</span>
<svg style="left:973.5px;top:138px" width="15" height="14" viewBox="0 0 15 14"><path d="M1.2 1h4v4.6h-4zM1.2 3.2h3.6" fill="none" stroke="#808080" stroke-width="1.3"/><path d="M8 1.6h3.6v4M9.6 4.4l2 2 2-2" fill="none" stroke="#808080" stroke-width="1.2"/><rect x="6.2" y="8.6" width="7" height="4" fill="#f4f4f4" stroke="#808080" stroke-width="1.1"/><path d="M7.6 10.6h2.4" stroke="#808080" stroke-width="1"/></svg>
<span class="t" style="left:989.80px;top:140.0px;font:normal 9.2px/1 'DejaVu Sans Condensed',sans-serif;letter-spacing:0.069px;color:#808080;text-shadow:.8px .8px 0 #fff">Update</span>
<svg style="left:1042px;top:137.5px" width="15" height="15" viewBox="0 0 15 15"><rect x=".3" y=".3" width="13.6" height="13.6" fill="#808080"/><path d="M4.4 3.2v1.8M4.4 6.4v7.4" stroke="#d8d8d8" stroke-width="1.3"/></svg>
<span class="t" style="left:1061.80px;top:140.0px;font:normal 9.2px/1 'DejaVu Sans Condensed',sans-serif;letter-spacing:0.105px;color:#808080;text-shadow:.8px .8px 0 #fff">Delete</span>

<span class="t" style="left:957.70px;top:189.5px;font:normal 16px/1 'Liberation Sans',sans-serif;letter-spacing:0.400px;">Manufacturer Code :</span>
<span class="t" style="left:1139.3px;top:188.3px;font-size:11px;color:#e02020">*</span>
<div class="box" style="left:900px;top:208px;width:269px;height:31px"></div>
<span class="t" style="left:1011.60px;top:212.6px;font:bold 19.6px/1 'Liberation Sans',sans-serif;letter-spacing:0.503px;color:#0000a8">0865</span>

<span class="t" style="left:913.50px;top:252.6px;font:normal 16px/1 'Liberation Sans',sans-serif;letter-spacing:0.242px;">Manufacturer Name :</span>
<div class="box" style="left:900px;top:271px;width:467px;height:80px"></div>
<div class="msb" style="left:1367px;top:271px;height:80px"><i style="top:0"><svg width="13" height="12" viewBox="0 0 13 12" style="left:0;top:0"><path d="M3.6 8.2h7L7.1 4.8z" fill="#fff"/><path d="M3 7.4h7L6.5 4z" fill="#808080"/></svg></i><i style="bottom:0"><svg width="13" height="12" viewBox="0 0 13 12" style="left:0;top:0"><path d="M3.6 5.4h7L7.1 8.8z" fill="#fff"/><path d="M3 4.6h7L6.5 8z" fill="#808080"/></svg></i></div>
<span class="t" style="left:901.80px;top:275.6px;font:bold 19.6px/1 'Liberation Sans',sans-serif;letter-spacing:0.604px;color:#0000a8">Boeing technics</span>

<span class="t" style="left:913.40px;top:358.8px;font:normal 16px/1 'Liberation Sans',sans-serif;letter-spacing:0.230px;">Manufacturer Address :</span>
<div class="box" style="left:900px;top:377px;width:467px;height:112px"></div>
<div class="msb" style="left:1367px;top:377px;height:112px"><i style="top:0"><svg width="13" height="12" viewBox="0 0 13 12" style="left:0;top:0"><path d="M3.6 8.2h7L7.1 4.8z" fill="#fff"/><path d="M3 7.4h7L6.5 4z" fill="#808080"/></svg></i><i style="bottom:0"><svg width="13" height="12" viewBox="0 0 13 12" style="left:0;top:0"><path d="M3.6 5.4h7L7.1 8.8z" fill="#fff"/><path d="M3 4.6h7L6.5 8z" fill="#808080"/></svg></i></div>
<span class="t" style="left:901.70px;top:381.2px;font:bold 19.6px/1 'Liberation Sans',sans-serif;letter-spacing:0.261px;color:#0000a8">USA, New York, str. Tulsa,345</span>

<span class="t" style="left:913.40px;top:495.4px;font:normal 16px/1 'Liberation Sans',sans-serif;letter-spacing:0.268px;">Manufacturer Contacts :</span>
<div class="box" style="left:900px;top:514px;width:467px;height:112px"></div>
<div class="msb" style="left:1367px;top:514px;height:112px"><i style="top:0"><svg width="13" height="12" viewBox="0 0 13 12" style="left:0;top:0"><path d="M3.6 8.2h7L7.1 4.8z" fill="#fff"/><path d="M3 7.4h7L6.5 4z" fill="#808080"/></svg></i><i style="bottom:0"><svg width="13" height="12" viewBox="0 0 13 12" style="left:0;top:0"><path d="M3.6 5.4h7L7.1 8.8z" fill="#fff"/><path d="M3 4.6h7L6.5 8z" fill="#808080"/></svg></i></div>
<span class="t" style="left:901.70px;top:519.0px;font:bold 19.6px/1 'Liberation Sans',sans-serif;letter-spacing:0.393px;color:#0000a8">BTs@google.com</span>

<span class="t" style="left:914.30px;top:632.9px;font:normal 16px/1 'Liberation Sans',sans-serif;letter-spacing:0.456px;">Remarks :</span>
<div class="box" style="left:900px;top:652px;width:467px;height:90px"></div>
<div class="msb" style="left:1367px;top:652px;height:90px"><i style="top:0"><svg width="13" height="12" viewBox="0 0 13 12" style="left:0;top:0"><path d="M3.6 8.2h7L7.1 4.8z" fill="#fff"/><path d="M3 7.4h7L6.5 4z" fill="#808080"/></svg></i><i style="bottom:0"><svg width="13" height="12" viewBox="0 0 13 12" style="left:0;top:0"><path d="M3.6 5.4h7L7.1 8.8z" fill="#fff"/><path d="M3 4.6h7L6.5 8z" fill="#808080"/></svg></i></div>
<span class="t" style="left:902.20px;top:656.4px;font:bold 19.6px/1 'Liberation Sans',sans-serif;letter-spacing:0.457px;color:#0000a8">Planer manufacture</span>
<div style="left:1094px;top:654px;width:1px;height:23px;background:#000"></div>

<!-- callout -->
<svg style="left:1000px;top:280px;z-index:9" width="130" height="150" viewBox="0 0 130 150">
<path d="M22.4 10.2 L115.4 107.9 L83.2 130.6 Z" fill="#0c9cf5"/>
<circle cx="101" cy="121.7" r="20.5" fill="#2a3442"/>
<circle cx="101" cy="121.7" r="19.2" fill="#fff"/>
<circle cx="101" cy="121.7" r="17.3" fill="#0c9cf5"/>
<text x="101" y="128.7" text-anchor="middle" font-family="Liberation Sans, sans-serif" font-weight="bold" font-size="19.4" fill="#fff">4</text>
</svg>

</div></body></html>
